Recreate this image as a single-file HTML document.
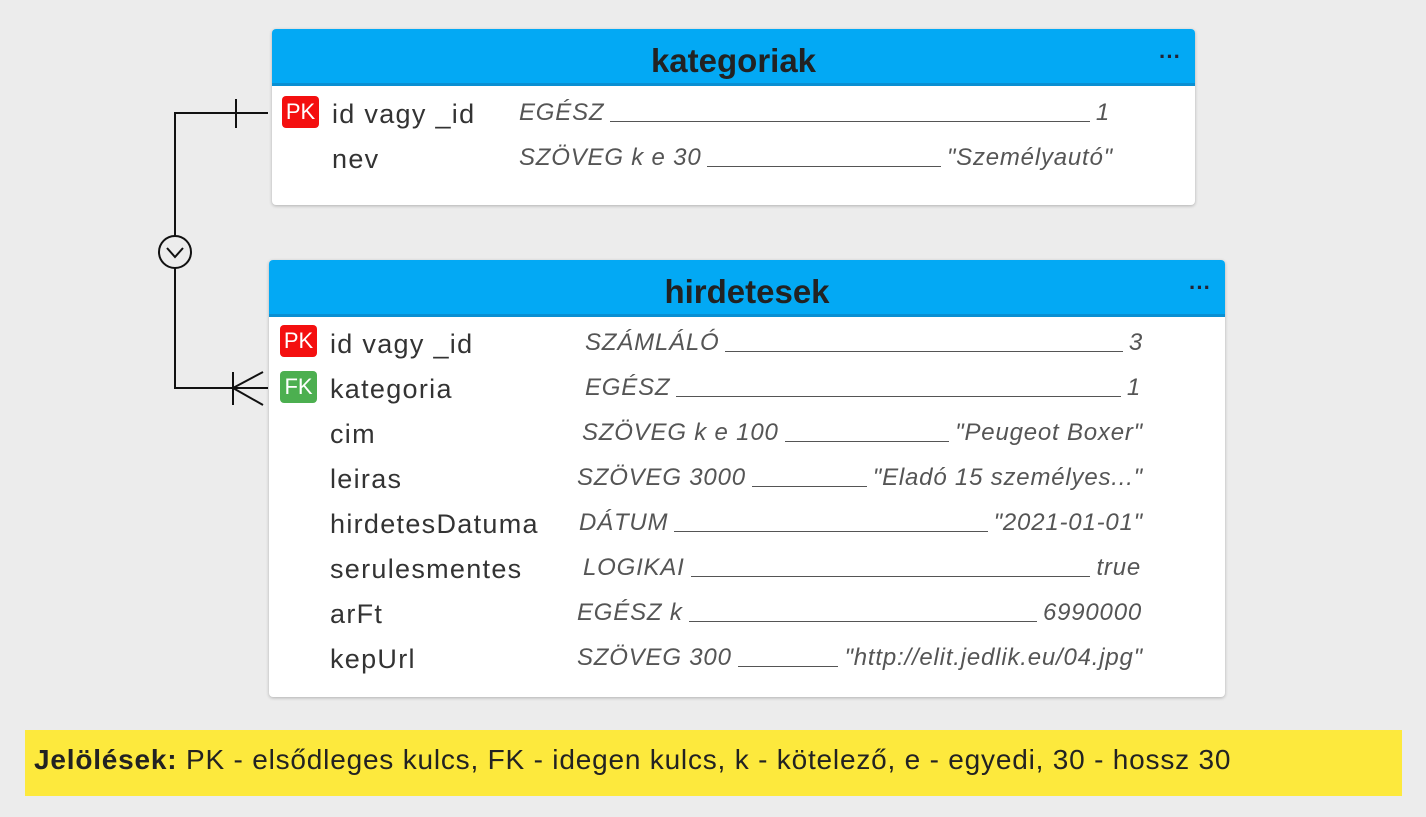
<!DOCTYPE html>
<html><head><meta charset="utf-8"><style>
body{margin:0;width:1426px;height:817px;background:#ececec;position:relative;overflow:hidden;font-family:"Liberation Sans","DejaVu Sans",sans-serif}
.box{position:absolute;background:#fff;border-radius:4px;box-shadow:0 1px 3px rgba(0,0,0,.25)}
.hd{position:absolute;left:0;right:0;top:0;background:#03a9f4;border-bottom:3px solid #0a8fd2;border-radius:4px 4px 0 0;text-align:center;font-weight:bold;font-size:33px;color:#222;}
.dots{position:absolute;right:14px;top:0;font-size:22px;color:#223;letter-spacing:0px;font-weight:bold}
.r{position:absolute;height:36px;line-height:38px}
.nm{font-size:27px;color:#333;letter-spacing:1.3px}
.tag{position:absolute;width:37px;height:32px;border-radius:4px;color:#fff;font-size:22px;line-height:32px;text-align:center}
.pk{background:#f40f0f}.fk{background:#4caf50}
.ty{display:flex;font-style:italic;font-size:24px;color:#555;white-space:nowrap;letter-spacing:0.8px}
.ty .u{flex:1;border-bottom:1.5px solid #555;margin:0 6px 8px 6px}
.note{position:absolute;left:25px;top:730px;width:1377px;height:66px;background:#fde93d;font-size:28px;letter-spacing:0.8px;line-height:60px;color:#222;box-sizing:border-box;padding-left:9px;white-space:nowrap}
</style></head><body>
<svg width="1426" height="817" style="position:absolute;left:0;top:0" fill="none" stroke="#111" stroke-width="2">
<path d="M268 113H175V236M175 268V388H268"/>
<path d="M236 99V128"/>
<circle cx="175" cy="252" r="16"/>
<path d="M167 248L175 257L183 248"/>
<path d="M233 372V405M233 388L263 372M233 388L263 405"/>
</svg>

<div class="box" style="left:272px;top:29px;width:923px;height:176px">
<div class="hd" style="height:54px;line-height:64px">kategoriak<span class="dots" style="line-height:56px">···</span></div>
</div>
<div class="tag pk" style="left:282px;top:96px">PK</div>
<div class="r nm" style="left:332px;top:95px">id vagy _id</div>
<div class="r nm" style="left:332px;top:140px">nev</div>
<div class="r ty" style="left:519px;width:591px;top:94px"><span>EGÉSZ</span><span class="u"></span><span>1</span></div>
<div class="r ty" style="left:519px;width:594px;top:139px"><span>SZÖVEG k e 30</span><span class="u"></span><span>"Személyautó"</span></div>

<div class="box" style="left:269px;top:260px;width:956px;height:437px">
<div class="hd" style="height:54px;line-height:64px">hirdetesek<span class="dots" style="line-height:56px">···</span></div>
</div>
<div class="tag pk" style="left:280px;top:325px">PK</div>
<div class="tag fk" style="left:280px;top:371px">FK</div>
<div class="r nm" style="left:330px;top:325px">id vagy _id</div>
<div class="r nm" style="left:330px;top:370px">kategoria</div>
<div class="r nm" style="left:330px;top:415px">cim</div>
<div class="r nm" style="left:330px;top:460px">leiras</div>
<div class="r nm" style="left:330px;top:505px">hirdetesDatuma</div>
<div class="r nm" style="left:330px;top:550px">serulesmentes</div>
<div class="r nm" style="left:330px;top:595px">arFt</div>
<div class="r nm" style="left:330px;top:640px">kepUrl</div>
<div class="r ty" style="left:585px;width:558px;top:324px"><span>SZÁMLÁLÓ</span><span class="u"></span><span>3</span></div>
<div class="r ty" style="left:585px;width:556px;top:369px"><span>EGÉSZ</span><span class="u"></span><span>1</span></div>
<div class="r ty" style="left:582px;width:561px;top:414px"><span>SZÖVEG k e 100</span><span class="u"></span><span>"Peugeot Boxer"</span></div>
<div class="r ty" style="left:577px;width:566px;top:459px"><span>SZÖVEG 3000</span><span class="u"></span><span>"Eladó 15 személyes..."</span></div>
<div class="r ty" style="left:579px;width:564px;top:504px"><span>DÁTUM</span><span class="u"></span><span>"2021-01-01"</span></div>
<div class="r ty" style="left:583px;width:558px;top:549px"><span>LOGIKAI</span><span class="u"></span><span>true</span></div>
<div class="r ty" style="left:577px;width:565px;top:594px"><span>EGÉSZ k</span><span class="u"></span><span>6990000</span></div>
<div class="r ty" style="left:577px;width:566px;top:639px"><span>SZÖVEG 300</span><span class="u"></span><span>"http://elit.jedlik.eu/04.jpg"</span></div>

<div class="note"><b>Jelölések:</b> PK - elsődleges kulcs, FK - idegen kulcs, k - kötelező, e - egyedi, 30 - hossz 30</div>
</body></html>
